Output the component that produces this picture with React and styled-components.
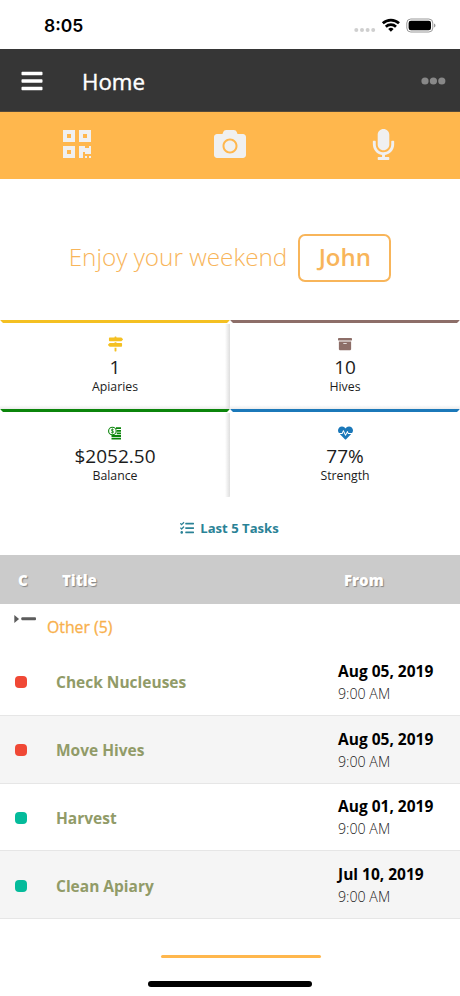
import React from 'react';
import styled, { createGlobalStyle } from 'styled-components';
import {
  FaBars,
  FaQrcode,
  FaCamera,
  FaMicrophone,
  FaMapSigns,
  FaArchive,
  FaHeartbeat,
  FaTasks,
} from 'react-icons/fa';

const GlobalStyle = createGlobalStyle`
  * {
    box-sizing: border-box;
  }
  body {
    margin: 0;
    background: #fff;
    color: #1c1c1c;
    font-family: 'Open Sans', sans-serif;
  }
`;

const Screen = styled.div`
  width: 460px;
  height: 996px;
  display: flex;
  flex-direction: column;
  overflow: hidden;
`;

const StatusBar = styled.header`
  height: 49px;
  flex: none;
  display: flex;
  align-items: center;
  justify-content: space-between;
  padding: 2px 24px 0 44px;
`;

const Clock = styled.span`
  font: 600 17.5px/22px Inter, sans-serif;
  color: #000;
`;

const NavBar = styled.nav`
  height: 63px;
  flex: none;
  display: flex;
  align-items: center;
  padding: 1px 14px 0 20px;
  background: #363636;
  color: #fff;
  border-bottom: 1px solid #55493a;

  svg:last-child {
    margin-left: auto;
  }
`;

const PageTitle = styled.h1`
  margin: 2px 0 0 38px;
  font-size: 22.3px;
  font-weight: 400;
  line-height: 32px;
  -webkit-text-stroke: 0.4px #fff;
`;

const Actions = styled.div`
  height: 67px;
  flex: none;
  display: grid;
  grid-template-columns: repeat(3, 1fr);
  place-items: center;
  padding-bottom: 3px;
  background: #ffb74d;
  color: #f0f0f0;
`;

const Greeting = styled.section`
  height: 141px;
  flex: none;
  display: flex;
  align-items: center;
  justify-content: center;
  gap: 11px;
  padding-top: 17px;
  color: #f8b55a;
  font-size: 24.3px;
  font-weight: 300;
  white-space: nowrap;

  span {
    margin-top: -4px;
  }
`;

const NameButton = styled.button`
  width: 93px;
  height: 48px;
  padding: 0 0 4px;
  border: 2px solid #f8b55a;
  border-radius: 7px;
  background: none;
  color: inherit;
  font: 600 24px 'Open Sans', sans-serif;
`;

const Stats = styled.section`
  flex: none;
  display: grid;
  grid-template-columns: 1fr 1fr;
  grid-auto-rows: 88.5px;
`;

const StatCard = styled.div`
  display: flex;
  flex-direction: column;
  align-items: center;
  border: solid transparent;
  border-width: 3px 3px 0;
  border-top-color: ${(props) => props.$color};
  border-radius: 1px;
  padding-top: 13px;
  background: no-repeat border-box;

  /* soft edge down the middle of the grid */
  &:nth-child(odd) {
    background-image: linear-gradient(to right, #fff, #dedede);
    background-size: 5px calc(100% - 4px);
    background-position: right bottom;
  }
  /* and a fainter one under the first row */
  &:nth-child(1) {
    background-image: linear-gradient(to right, transparent, #dedede),
      linear-gradient(to bottom, #fff, #ececec);
    background-size: 5px calc(100% - 4px), 100% 4px;
  }
  &:nth-child(2) {
    background-image: linear-gradient(to bottom, #fff, #ececec);
    background-size: 100% 4px;
    background-position: bottom;
  }

  svg {
    height: 16px;
    color: ${(props) => props.$color};
  }
`;

const StatValue = styled.span`
  margin-top: 3px;
  font-size: 19px;
  line-height: 24px;
`;

const StatLabel = styled.span`
  font-size: 12.3px;
  line-height: 15px;
`;

const TasksHeading = styled.h2`
  height: 58px;
  flex: none;
  display: flex;
  align-items: center;
  justify-content: center;
  gap: 6px;
  margin: 0;
  padding: 4px 1px 0 0;
  color: #2a8296;
  font-size: 13.1px;
  font-weight: 700;
`;

const TableHead = styled.div`
  height: 49px;
  flex: none;
  display: grid;
  grid-template-columns: 44px 282px 1fr;
  align-items: center;
  padding-left: 18px;
  background: #cbcbcb;
  color: #fff;
  font-size: 15px;
  font-weight: 800;
  text-shadow: 1px 1px 1px rgba(0, 0, 0, 0.35);
`;

const GroupRow = styled.div`
  height: 44px;
  flex: none;
  display: flex;
  align-items: flex-start;
  padding: 10px 0 0 14px;
  color: #f8b04c;
  font-size: 15.8px;
  font-weight: 400;
  -webkit-text-stroke: 0.3px #f8b04c;
`;

const GroupName = styled.span`
  margin: 2px 0 0 11px;
  line-height: 22px;
`;

const TaskRow = styled.div`
  height: 67.75px;
  flex: none;
  display: grid;
  grid-template-columns: 41px 282px 1fr;
  align-items: center;
  padding: 2px 0 0 15px;
  border-bottom: 1px solid #e6e6e6;
  background: ${(props) => (props.$striped ? '#f5f5f5' : '#fff')};
`;

const Marker = styled.i`
  width: 12px;
  height: 12px;
  border-radius: 4px;
  background: ${(props) => props.$color};
`;

const TaskTitle = styled.span`
  color: #919b68;
  font-size: 15.5px;
  font-weight: 700;
`;

const TaskDate = styled.div`
  color: #000;
  font-size: 15.5px;
  font-weight: 700;
  line-height: 22px;
`;

const TaskTime = styled.div`
  font-size: 14.2px;
  font-weight: 300;
  line-height: 23px;
`;

const Footer = styled.footer`
  flex: 1;
  display: flex;
  flex-direction: column;
  align-items: center;
  justify-content: flex-end;
  gap: 23px;
  padding-bottom: 9px;
`;

const AccentLine = styled.div`
  width: 160px;
  height: 3px;
  margin-left: 22px;
  border-radius: 2px;
  background: #ffb74d;
`;

const HomeIndicator = styled.div`
  width: 164px;
  height: 6px;
  border-radius: 3px;
  background: #000;
`;

const StatusIcons = () => (
  <svg width="82" height="18" viewBox="0 0 82 18">
    <g fill="#cfcfcf">
      <circle cx="2.3" cy="13" r="2" />
      <circle cx="8" cy="13" r="2" />
      <circle cx="13.6" cy="13" r="2" />
      <circle cx="19.2" cy="13" r="2" />
    </g>
    <g fill="none" stroke="#000" strokeWidth="2.7">
      <path d="M28.8 6.3A12 12 0 0 1 45 6.3" />
      <path d="M31.8 9.7A7.4 7.4 0 0 1 42 9.7" />
    </g>
    <path d="M36.9 14.7l-2.7-2.8a4 4 0 0 1 5.4 0z" fill="#000" />
    <rect x="52.8" y="2" width="26" height="13" rx="4" fill="none" stroke="#999" />
    <rect x="54.6" y="3.8" width="22.4" height="9.4" rx="2.3" fill="#000" />
    <path d="M80 6.5c2 .7 2 3.3 0 4z" fill="#999" />
  </svg>
);

const MoreIcon = () => (
  <svg width="25" height="8" viewBox="0 0 25 8" fill="#888">
    <circle cx="4" cy="4" r="3.6" />
    <circle cx="12.4" cy="4" r="3.6" />
    <circle cx="20.8" cy="4" r="3.6" />
  </svg>
);

const MoneyIcon = () => (
  <svg width="14" viewBox="0 0 14 16" fill="none">
    <path
      d="M8 3.2h5M8.8 5.8H13M8.8 8.4H13M3.5 11H13M3.5 13.6H13"
      stroke="#0b850b"
      strokeWidth="1.8"
    />
    <circle cx="4.4" cy="6" r="3.8" fill="#fff" stroke="#0b850b" strokeWidth="1.1" />
    <path
      d="M5.7 4.8C5 4 3.3 4.1 3.3 5.1c0 1.2 2.3.6 2.3 1.9C5.6 8 3.8 8 3.1 7.2M4.4 3.5v5"
      stroke="#0b850b"
      strokeWidth=".8"
    />
  </svg>
);

const CollapseIcon = () => (
  <svg width="22" height="9" viewBox="0 0 22 9" fill="#5c5c5c">
    <path d="M.3 1l4.8 4-4.8 4z" />
    <rect x="7.3" y="3.2" width="14.7" height="3" rx="1" />
  </svg>
);

const stats = [
  { label: 'Apiaries', value: '1', color: '#f4c022', icon: <FaMapSigns size={15} /> },
  { label: 'Hives', value: '10', color: '#8d6e68', icon: <FaArchive size={14} /> },
  { label: 'Balance', value: '$2052.50', color: '#0b850b', icon: <MoneyIcon /> },
  { label: 'Strength', value: '77%', color: '#1b78b9', icon: <FaHeartbeat size={15} /> },
];

const tasks = [
  { title: 'Check Nucleuses', date: 'Aug 05, 2019', time: '9:00 AM', color: '#f04835' },
  { title: 'Move Hives', date: 'Aug 05, 2019', time: '9:00 AM', color: '#f04835' },
  { title: 'Harvest', date: 'Aug 01, 2019', time: '9:00 AM', color: '#04bb9b' },
  { title: 'Clean Apiary', date: 'Jul 10, 2019', time: '9:00 AM', color: '#04bb9b' },
];

const App = () => (
  <>
    <GlobalStyle />
    <Screen>
      <StatusBar>
        <Clock>8:05</Clock>
        <StatusIcons />
      </StatusBar>
      <NavBar>
        <FaBars size={24} />
        <PageTitle>Home</PageTitle>
        <MoreIcon />
      </NavBar>
      <Actions>
        <FaQrcode size={32} />
        <FaCamera size={32} />
        <FaMicrophone size={31} />
      </Actions>
      <Greeting>
        <span>Enjoy your weekend</span>
        <NameButton>John</NameButton>
      </Greeting>
      <Stats>
        {stats.map((stat) => (
          <StatCard key={stat.label} $color={stat.color}>
            {stat.icon}
            <StatValue>{stat.value}</StatValue>
            <StatLabel>{stat.label}</StatLabel>
          </StatCard>
        ))}
      </Stats>
      <TasksHeading>
        <FaTasks size={14} />
        Last 5 Tasks
      </TasksHeading>
      <TableHead>
        <span>C</span>
        <span>Title</span>
        <span>From</span>
      </TableHead>
      <GroupRow>
        <CollapseIcon />
        <GroupName>Other (5)</GroupName>
      </GroupRow>
      {tasks.map((task, index) => (
        <TaskRow key={task.title} $striped={index % 2 === 1}>
          <Marker $color={task.color} />
          <TaskTitle>{task.title}</TaskTitle>
          <div>
            <TaskDate>{task.date}</TaskDate>
            <TaskTime>{task.time}</TaskTime>
          </div>
        </TaskRow>
      ))}
      <Footer>
        <AccentLine />
        <HomeIndicator />
      </Footer>
    </Screen>
  </>
);

export default App;
